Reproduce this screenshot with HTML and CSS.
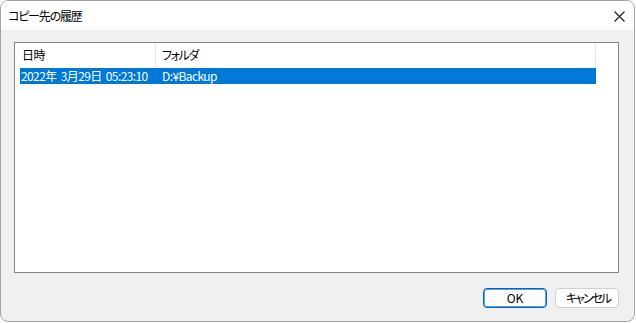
FILE: index.html
```html
<!DOCTYPE html>
<html lang="ja">
<head>
<meta charset="utf-8">
<title>コピー先の履歴</title>
<link rel="stylesheet" href="styles.css">
</head>
<body>
<div class="window">
  <div class="titlebar">
    <span class="title">コピー先の履歴</span>
    <span class="close" aria-label="閉じる">
      <svg width="11" height="11" viewBox="0 0 11 11"><path d="M0.5 0.5 L10.5 10.5 M10.5 0.5 L0.5 10.5" stroke="#1a1a1a" stroke-width="1.1" fill="none"/></svg>
    </span>
  </div>
  <div class="content">
    <div class="listbox">
      <div class="header">
        <div class="col col-date">日時</div>
        <div class="col col-folder">フォルダ</div>
        <div class="col col-rest"></div>
      </div>
      <div class="row selected">
        <div class="cell cell-date">2022年 3月29日 05:23:10</div>
        <div class="cell cell-folder">D:¥Backup</div>
      </div>
    </div>
    <div class="buttons">
      <button class="btn btn-default">OK</button>
      <button class="btn btn-cancel">キャンセル</button>
    </div>
  </div>
</div>
</body>
</html>
```
FILE: styles.css
```css
* { box-sizing: border-box; }
html, body {
  margin: 0;
  padding: 0;
  background: #ffffff;
  width: 636px;
  height: 323px;
  overflow: hidden;
}
body {
  font-family: "Noto Sans CJK JP", "Noto Sans", sans-serif;
  font-size: 12px;
  font-feature-settings: "palt";
  color: #000;
}
.window {
  width: 635px;
  height: 322px;
  border: 1px solid #a3a3a3;
  border-radius: 8px;
  overflow: hidden;
  display: flex;
  flex-direction: column;
  background: #f0f0f0;
}
.titlebar {
  height: 29px;
  background: #ffffff;
  display: flex;
  align-items: center;
  justify-content: space-between;
  padding: 0 9px 0 7px;
  flex: none;
}
.title {
  font-size: 12px;
  line-height: 14px;
  padding-top: 1px;
  letter-spacing: -1.2px;
}
.close {
  display: flex;
  width: 11px;
  height: 11px;
  margin-top: 1px;
}
.content {
  flex: 1;
  display: flex;
  flex-direction: column;
  padding: 12px 15px 0 13px;
}
.listbox {
  height: 231px;
  border: 1px solid #858585;
  background: #ffffff;
  flex: none;
}
.header {
  display: flex;
  height: 24px;
}
.col {
  line-height: 24px;
  padding-left: 7px;
  border-right: 1px solid #e5e5e5;
}
.col-date { width: 141px; letter-spacing: -0.5px; }
.col-folder { width: 440px; padding-left: 6px; letter-spacing: -1.4px; }
.col-rest { flex: 1; border-right: none; }
.row {
  display: flex;
  height: 16px;
  margin-top: 1px;
  margin-left: 5px;
  width: 576px;
}
.row.selected {
  background: #0078d7;
  color: #ffffff;
}
.cell {
  line-height: 16px;
  white-space: pre;
  letter-spacing: -0.6px;
}
.cell-date { width: 136px; padding-left: 1px; word-spacing: 2px; }
.cell-folder { padding-left: 6px; }
.buttons {
  display: flex;
  justify-content: flex-end;
  gap: 8px;
  margin-top: 15px;
  padding-right: 0;
}
.btn {
  width: 64px;
  height: 20px;
  font-family: "Noto Sans CJK JP", "Noto Sans", sans-serif;
  font-size: 12px;
  font-feature-settings: "palt";
  line-height: 16px;
  padding: 0;
  background: #fdfdfd;
  border: 1px solid #d0d0d0;
  border-radius: 4px;
  color: #000;
}
.btn-default {
  border: 1px solid #0067c0;
  box-shadow: inset 0 0 0 1px #5aa0e0;
}
.btn-cancel {
  letter-spacing: -2px;
  padding-left: 2px;
}
```
